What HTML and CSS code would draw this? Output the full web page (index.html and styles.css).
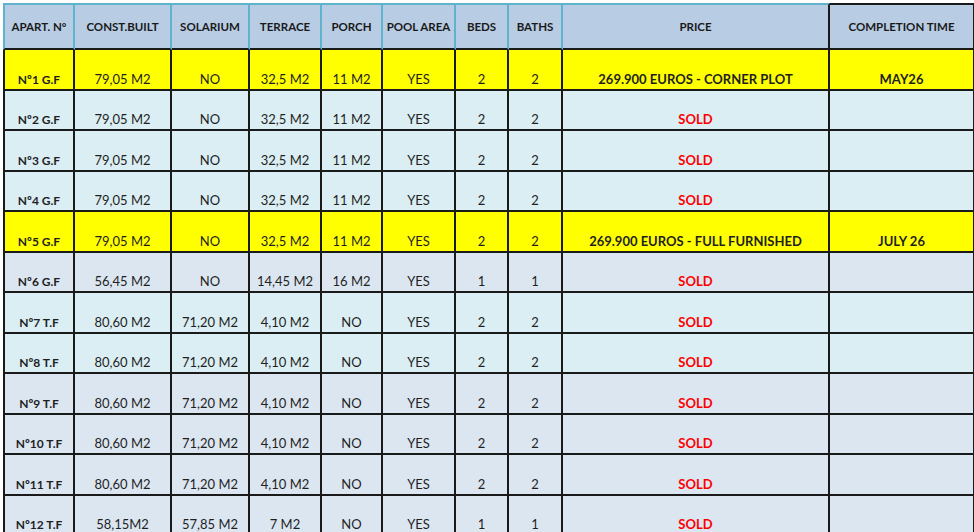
FILE: index.html
```html
<!DOCTYPE html>
<html lang="en">
<head>
<meta charset="utf-8">
<title>Apartments</title>
<link rel="stylesheet" href="styles.css">
</head>
<body>
<table class="sheet">
  <thead>
    <tr>
      <th class="c-apt first">APART. Nº</th>
      <th class="c-built">CONST.BUILT</th>
      <th class="c-sol">SOLARIUM</th>
      <th class="c-ter">TERRACE</th>
      <th class="c-por">PORCH</th>
      <th class="c-pool">POOL AREA</th>
      <th class="c-beds">BEDS</th>
      <th class="c-baths">BATHS</th>
      <th class="c-price">PRICE</th>
      <th class="c-comp">COMPLETION TIME</th>
    </tr>
  </thead>
  <tbody>
    <tr class="yellow">
      <td class="apt first">Nº1 G.F</td><td>79,05 M2</td><td>NO</td><td>32,5 M2</td><td>11 M2</td><td>YES</td><td>2</td><td>2</td><td class="bold">269.900 EUROS - CORNER PLOT</td><td class="bold">MAY26</td>
    </tr>
    <tr class="cyan">
      <td class="apt first">Nº2 G.F</td><td>79,05 M2</td><td>NO</td><td>32,5 M2</td><td>11 M2</td><td>YES</td><td>2</td><td>2</td><td class="sold">SOLD</td><td></td>
    </tr>
    <tr class="cyan">
      <td class="apt first">Nº3 G.F</td><td>79,05 M2</td><td>NO</td><td>32,5 M2</td><td>11 M2</td><td>YES</td><td>2</td><td>2</td><td class="sold">SOLD</td><td></td>
    </tr>
    <tr class="cyan">
      <td class="apt first">Nº4 G.F</td><td>79,05 M2</td><td>NO</td><td>32,5 M2</td><td>11 M2</td><td>YES</td><td>2</td><td>2</td><td class="sold">SOLD</td><td></td>
    </tr>
    <tr class="yellow">
      <td class="apt first">Nº5 G.F</td><td>79,05 M2</td><td>NO</td><td>32,5 M2</td><td>11 M2</td><td>YES</td><td>2</td><td>2</td><td class="bold">269.900 EUROS - FULL FURNISHED</td><td class="bold">JULY 26</td>
    </tr>
    <tr class="grey">
      <td class="apt first">Nº6 G.F</td><td>56,45 M2</td><td>NO</td><td>14,45 M2</td><td>16 M2</td><td>YES</td><td>1</td><td>1</td><td class="sold">SOLD</td><td></td>
    </tr>
    <tr class="cyan">
      <td class="apt first">Nº7 T.F</td><td>80,60 M2</td><td>71,20 M2</td><td>4,10 M2</td><td>NO</td><td>YES</td><td>2</td><td>2</td><td class="sold">SOLD</td><td></td>
    </tr>
    <tr class="cyan">
      <td class="apt first">Nº8 T.F</td><td>80,60 M2</td><td>71,20 M2</td><td>4,10 M2</td><td>NO</td><td>YES</td><td>2</td><td>2</td><td class="sold">SOLD</td><td></td>
    </tr>
    <tr class="grey">
      <td class="apt first">Nº9 T.F</td><td>80,60 M2</td><td>71,20 M2</td><td>4,10 M2</td><td>NO</td><td>YES</td><td>2</td><td>2</td><td class="sold">SOLD</td><td></td>
    </tr>
    <tr class="grey">
      <td class="apt first">Nº10 T.F</td><td>80,60 M2</td><td>71,20 M2</td><td>4,10 M2</td><td>NO</td><td>YES</td><td>2</td><td>2</td><td class="sold">SOLD</td><td></td>
    </tr>
    <tr class="grey">
      <td class="apt first">Nº11 T.F</td><td>80,60 M2</td><td>71,20 M2</td><td>4,10 M2</td><td>NO</td><td>YES</td><td>2</td><td>2</td><td class="sold">SOLD</td><td></td>
    </tr>
    <tr class="grey">
      <td class="apt first">Nº12 T.F</td><td>58,15M2</td><td>57,85 M2</td><td>7 M2</td><td>NO</td><td>YES</td><td>1</td><td>1</td><td class="sold">SOLD</td><td></td>
    </tr>
  </tbody>
</table>
</body>
</html>
```

FILE: styles.css
```css
html, body {
  margin: 0;
  padding: 0;
  background: #ffffff;
}

body {
  padding: 3px 0 0 3px;
  font-family: Lato, "Open Sans", "Liberation Sans", sans-serif;
  color: #1f1f1f;
}

.sheet {
  border-collapse: separate;
  border-spacing: 0;
  table-layout: fixed;
  width: 972px;
}

.sheet th,
.sheet td {
  box-sizing: border-box;
  text-align: center;
  white-space: nowrap;
  overflow: hidden;
  padding: 0;
}

.sheet th {
  height: 47px;
  background: #b8cce4;
  font-size: 11.5px;
  font-weight: 700;
  color: #1a1a1a;
  vertical-align: middle;
  border-top: 2px solid #5fb3cc;
  border-right: 2px solid #5fb3cc;
  border-bottom: 2px solid #1a1a1a;
}

.sheet th.first { border-left: 2px solid #5fb3cc; }
.sheet th.c-price { border-right: 2px solid #1a1a1a; }
.sheet th.c-comp {
  border-top: 2px solid #1a1a1a;
  border-right: 2px solid #1a1a1a;
}

.c-apt { width: 72px; }
.c-built { width: 97px; }
.c-sol { width: 78px; }
.c-ter { width: 72px; }
.c-por { width: 61px; }
.c-pool { width: 73px; }
.c-beds { width: 53px; }
.c-baths { width: 54px; }
.c-price { width: 267px; }
.c-comp { width: 145px; }

.sheet td {
  height: 40.5px;
  font-size: 13px;
  line-height: 15px;
  vertical-align: bottom;
  padding-bottom: 2px;
  border-right: 2px solid #1a1a1a;
  border-bottom: 2px solid #1a1a1a;
}

.sheet td.first { border-left: 2px solid #1a1a1a; }

.sheet td.apt {
  font-size: 12px;
  font-weight: 700;
}

.sheet td.bold { font-weight: 700; }

.sheet td.sold {
  font-weight: 700;
  color: #ff0000;
}

.yellow td { background: #ffff00; }
.cyan td { background: #daeef3; }
.grey td { background: #dce6f1; }
```
